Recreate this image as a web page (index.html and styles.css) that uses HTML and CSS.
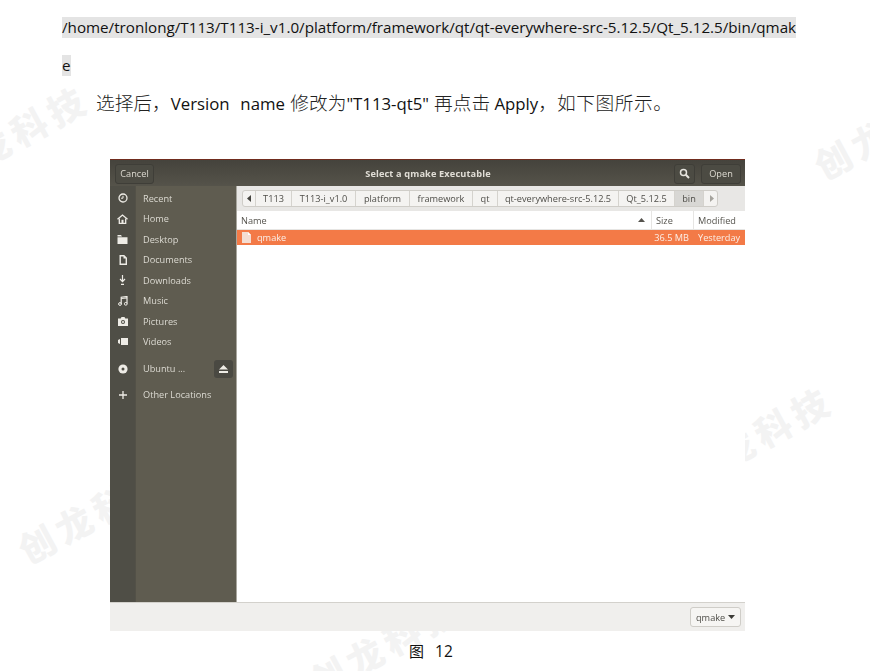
FILE: index.html
```html
<!DOCTYPE html>
<html lang="zh">
<head>
<meta charset="utf-8">
<title>图 12</title>
<link rel="stylesheet" href="styles.css">
</head>
<body>
<div class="wm wm1">创龙科技</div>
<div class="wm wm2">创龙科技</div>
<div class="wm wm3">创龙科技</div>
<div class="wm wm4">创龙科技</div>
<div class="wm wm5">创龙科技</div>
<main class="page">
  <p class="code"><span>/home/tronlong/T113/T113-i_v1.0/platform/framework/qt/qt-everywhere-src-5.12.5/Qt_5.12.5/bin/qmak</span></p>
  <p class="code code2"><span>e</span></p>
  <p class="para">选择后，<span class="lat wide">Version&nbsp; name </span>修改为<span class="lat">"T113-qt5"</span><span class="after">再点击</span><span class="lat"> Apply</span>，<span class="tail">如下图所示。</span></p>
  <section class="dialog">
    <header class="titlebar">
      <div class="hbtn cancel">Cancel</div>
      <div class="title">Select a qmake Executable</div>
      <div class="hbtn search"><svg width="11" height="11" viewBox="0 0 11 11"><circle cx="4.500" cy="4.500" r="3" fill="none" stroke="#e6e4de" stroke-width="1.500"/><path d="M6.800 6.800 10 10" stroke="#e6e4de" stroke-width="2"/></svg></div>
      <div class="hbtn open">Open</div>
    </header>
    <div class="body">
      <aside class="sidebar">
        <div class="side"><span class="ico"><svg width="10" height="10" viewBox="0 0 10 10"><circle cx="5" cy="5" r="4" fill="none" stroke="#eeece6" stroke-width="1.300"/><path d="M5 2.800V5.200H3" fill="none" stroke="#eeece6"/></svg></span><span class="lbl">Recent</span></div>
        <div class="side"><span class="ico"><svg width="11" height="10" viewBox="0 0 11 10"><path d="M.5 5.300 5.500 1l5 4.300" fill="none" stroke="#eeece6" stroke-width="1.300"/><path d="M2.300 4.600V9.300H8.700V4.600" fill="none" stroke="#eeece6" stroke-width="1.300"/><rect x="4.500" y="5.800" width="2" height="3.500" fill="#eeece6"/></svg></span><span class="lbl">Home</span></div>
        <div class="side"><span class="ico"><svg width="11" height="9" viewBox="0 0 11 9"><path d="M.5 0H4L5 1.500H.5z M.5 2.300h10V9H.5z" fill="#eeece6"/></svg></span><span class="lbl">Desktop</span></div>
        <div class="side"><span class="ico"><svg width="8" height="10" viewBox="0 0 8 10"><path d="M.5 0H5.200L8 2.800V10H.5zM1.900 1.400V8.600H6.600V3.600H4.500V1.400z" fill="#eeece6" fill-rule="evenodd"/></svg></span><span class="lbl">Documents</span></div>
        <div class="side"><span class="ico"><svg width="9" height="10" viewBox="0 0 9 10"><path d="M4.500 0V6M2 4l2.500 2.700L7 4M3 9.300h3" fill="none" stroke="#eeece6" stroke-width="1.200"/></svg></span><span class="lbl">Downloads</span></div>
        <div class="side"><span class="ico"><svg width="10" height="10" viewBox="0 0 10 10"><path d="M3.200 8V1.200L9 .5V7.500" fill="none" stroke="#eeece6" stroke-width="1.200"/><path d="M3.200 2.500 9 1.800" fill="none" stroke="#eeece6" stroke-width="1.200"/><circle cx="2" cy="8" r="1.400" fill="none" stroke="#eeece6"/><circle cx="7.800" cy="7.800" r="1.400" fill="none" stroke="#eeece6"/></svg></span><span class="lbl">Music</span></div>
        <div class="side"><span class="ico"><svg width="10" height="9" viewBox="0 0 10 9"><path d="M0 1.500H2.700L3.500 0H6.500L7.300 1.500H10V9H0z" fill="#eeece6"/><circle cx="5" cy="5" r="2" fill="#4f4e46"/><circle cx="5" cy="5" r="1" fill="#eeece6"/></svg></span><span class="lbl">Pictures</span></div>
        <div class="side"><span class="ico"><svg width="10" height="7" viewBox="0 0 10 7"><path d="M3 0H10V7H3zM0 2 2 1V6L0 5z" fill="#eeece6"/></svg></span><span class="lbl">Videos</span></div>
        <div class="side gap"><span class="ico"><svg width="10" height="10" viewBox="0 0 10 10"><circle cx="5" cy="5" r="4.600" fill="#eeece6"/><circle cx="5" cy="5" r="1.500" fill="#4f4e46"/></svg></span><span class="lbl">Ubuntu ...</span><span class="eject"><svg width="9" height="8" viewBox="0 0 9 8"><path d="M4.500 0 9 4.600H0zM0 6h9v2H0z" fill="#eeece6"/></svg></span></div>
        <div class="side last"><span class="ico"><svg width="8" height="8" viewBox="0 0 8 8"><path d="M4 0V8M0 4H8" stroke="#eeece6" stroke-width="1.300"/></svg></span><span class="lbl">Other Locations</span></div>
      </aside>
      <div class="files">
        <div class="pathwrap">
          <nav class="path">
            <span class="seg arrow"><svg width="4" height="7" viewBox="0 0 4 7"><path d="M4 0V7L0 3.500z" fill="#45443f"/></svg></span>
            <span class="seg">T113</span>
            <span class="seg">T113-i_v1.0</span>
            <span class="seg">platform</span>
            <span class="seg">framework</span>
            <span class="seg">qt</span>
            <span class="seg">qt-everywhere-src-5.12.5</span>
            <span class="seg">Qt_5.12.5</span>
            <span class="seg on">bin</span>
            <span class="seg arrow"><svg width="4" height="7" viewBox="0 0 4 7"><path d="M0 0V7L4 3.500z" fill="#a5a39d"/></svg></span>
          </nav>
        </div>
        <div class="cols">
          <div class="col cname">Name<svg width="7" height="4" viewBox="0 0 7 4"><path d="M3.500 0 7 4H0z" fill="#55534d"/></svg></div>
          <div class="col csize">Size</div>
          <div class="col cmod">Modified</div>
        </div>
        <div class="row">
          <div class="fname"><svg width="9" height="11" viewBox="0 0 9 11"><path d="M0 0H6L9 3V11H0z" fill="#f4ddd2"/><path d="M6 0 9 3H6z" fill="#fff"/></svg>qmake</div>
          <div class="fsize">36.5 MB</div>
          <div class="fmod">Yesterday</div>
        </div>
      </div>
    </div>
    <footer class="foot"><div class="combo">qmake<svg width="7" height="4" viewBox="0 0 7 4"><path d="M0 0H7L3.500 4z" fill="#3c3b37"/></svg></div></footer>
  </section>
  <p class="caption">图<span class="capnum">12</span></p>
</main>
</body>
</html>
```
FILE: styles.css
```css
* { box-sizing: border-box; }
html, body { margin: 0; padding: 0; }
body {
  width: 870px;
  height: 671px;
  overflow: hidden;
  position: relative;
  background: #fff;
  font-family: "Open Sans", "Noto Sans CJK SC", sans-serif;
  color: #111;
}
.wm {
  position: absolute;
  width: 168px;
  height: 40px;
  font-family: "Noto Sans CJK SC", sans-serif;
  font-weight: 900;
  font-size: 36px;
  line-height: 40px;
  letter-spacing: 6px;
  color: #f3f3f3;
  white-space: nowrap;
  transform: rotate(-28.6deg);
}
.wm1 { left: -72px; top: 114px; }
.wm2 { left: 806px; top: 107px; }
.wm3 { left: 672px; top: 415px; }
.wm4 { left: 10px; top: 491px; }
.wm5 { left: 301px; top: 623px; }
.page {
  position: relative;
  padding: 17px 0 0 62px;
}
.page p { margin: 0; }
.code {
  height: 21px;
  font-size: 15.2px;
  line-height: 21px;
  white-space: nowrap;
}
.code span { display: inline-block; height: 21px; background: #e4e4e4; }
.code2 { margin-top: 17px !important; }
.para {
  height: 24px;
  margin: 15px 0 0 34px !important;
  font-size: 18.700px;
  font-weight: 300;
  line-height: 24px;
  white-space: nowrap;
  color: #222;
}
.lat { font-size: 16.800px; font-weight: 400; color: #111; }
.wide { word-spacing: 1px; }
.after { margin-left: 5px; }
.tail { letter-spacing: .6px; }
.dialog {
  margin: 44px 0 0 48px;
  width: 635px;
  height: 472px;
  display: flex;
  flex-direction: column;
  font-size: 9.200px;
  filter: blur(.3px);
}
.titlebar {
  height: 27px;
  flex: none;
  display: flex;
  align-items: center;
  padding: 1px 4px 0 5px;
  background: linear-gradient(#45433c, #55534a);
  border-top: 1px solid #702c1e;
  color: #dedbd2;
}
.hbtn {
  height: 20px;
  display: flex;
  align-items: center;
  justify-content: center;
  border: 1px solid #3f3e38;
  border-radius: 3px;
  background: #4c4b43;
}
.cancel { width: 39px; }
.title {
  flex: 1;
  text-align: center;
  font-weight: 700;
  letter-spacing: .15px;
  color: #e0ddd5;
  padding-left: 28px;
}
.search { width: 21px; }
.open { width: 40px; margin-left: 6px; }
.body { flex: 1; display: flex; min-height: 0; }
.sidebar {
  width: 127px;
  flex: none;
  padding-top: 2px;
  background: linear-gradient(90deg, #4f4e46 0, #4f4e46 25px, #47463f 25px, #5f5c50 26px);
  border-right: 1px solid #a9a79f;
  color: #dcdad2;
}
.side { height: 20.500px; display: flex; align-items: center; }
.side.gap { margin-top: 6.500px; }
.side.last { margin-top: 5.500px; }
.ico { width: 25px; flex: none; display: flex; justify-content: center; }
.lbl { margin-left: 8px; flex: 1; }
.eject {
  width: 19px;
  height: 18px;
  margin-right: 3px;
  border-radius: 3px;
  background: #4a4942;
  display: flex;
  align-items: center;
  justify-content: center;
}
.files { flex: 1; background: #fff; color: #55534d; }
.pathwrap { height: 25px; padding: 4px 0 0 5px; background: #e8e7e5; }
.path {
  width: 476px;
  height: 17px;
  display: grid;
  grid-template-columns: 13px 36px 64px 54px 63px 25px 121px 56px 29px 15px;
  border: 1px solid #cfcdc8;
  border-radius: 3px;
  background: #f4f3f1;
}
.seg {
  display: flex;
  align-items: center;
  justify-content: center;
  border-right: 1px solid #d5d3ce;
  color: #4f4e49;
}
.seg:last-child { border-right: 0; }
.seg.on { background: #d8d7d4; }
.cols {
  height: 19px;
  display: flex;
  align-items: center;
  border-bottom: 1px solid #e6e5e3;
}
.col { height: 100%; display: flex; align-items: center; padding-left: 4px; }
.cname { width: 414px; justify-content: space-between; padding-right: 6px; }
.csize { width: 42px; border-left: 1px solid #e6e5e3; }
.cmod { flex: 1; border-left: 1px solid #e6e5e3; }
.row {
  height: 15px;
  display: flex;
  align-items: center;
  background: #f37a47;
  color: #fbeee7;
}
.fname { width: 414px; display: flex; align-items: center; gap: 6px; padding-left: 5px; }
.fsize { width: 38px; text-align: right; white-space: nowrap; }
.fmod { margin-left: 9px; white-space: nowrap; }
.foot {
  height: 29px;
  flex: none;
  display: flex;
  align-items: center;
  justify-content: flex-end;
  padding-right: 4px;
  background: #f0efed;
  border-top: 1px solid #d3d1cc;
}
.combo {
  width: 51px;
  height: 20px;
  display: flex;
  align-items: center;
  justify-content: space-between;
  padding: 0 5px;
  border: 1px solid #cfcdc8;
  border-radius: 3px;
  background: #f6f5f3;
  color: #4f4e49;
}
.caption {
  margin-top: 8px !important;
  padding-left: 347px;
  font-size: 15px;
  line-height: 24px;
}
.capnum { margin-left: 11px; font-size: 15.500px; }
```
